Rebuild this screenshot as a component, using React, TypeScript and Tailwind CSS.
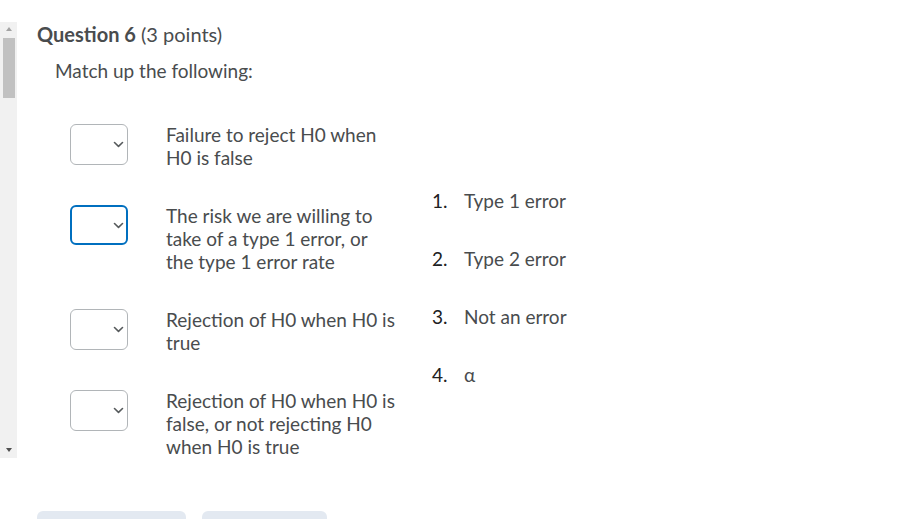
const prompts = [
  { text: 'Failure to reject H0 when H0 is false', focused: false },
  { text: 'The risk we are willing to take of a type 1 error, or the type 1 error rate', focused: true },
  { text: 'Rejection of H0 when H0 is true', focused: false },
  { text: 'Rejection of H0 when H0 is false, or not rejecting H0 when H0 is true', focused: false },
]

const answers = ['Type 1 error', 'Type 2 error', 'Not an error', 'α']

function Chevron() {
  return (
    <svg width="11" height="7" viewBox="0 0 11 7" fill="none" className="text-[#565a5c]">
      <path d="M1.5 1.5 L5.5 5.3 L9.5 1.5" stroke="currentColor" strokeWidth="1.6" strokeLinecap="round" strokeLinejoin="round" />
    </svg>
  )
}

function MatchSelect({ focused }: { focused: boolean }) {
  return (
    <div
      className={
        focused
          ? 'flex h-[40px] w-[58px] shrink-0 items-center justify-end rounded-[6px] border-2 border-[#006fbf] bg-white pr-[2px]'
          : 'flex h-[41px] w-[58px] shrink-0 items-center justify-end rounded-[6px] border border-[#b1b5b8] bg-white pr-[3px]'
      }
    >
      <Chevron />
    </div>
  )
}

function Scrollbar() {
  return (
    <div className="mt-[22px] flex h-[436px] w-[17px] shrink-0 flex-col items-center bg-[#f1f1f1]">
      <div className="mt-[5px] h-0 w-0 border-x-[3.5px] border-b-[4px] border-x-transparent border-b-[#a3a3a3]" />
      <div className="mt-[7px] h-[60px] w-[12px] bg-[#c1c1c1]" />
      <div className="flex-1" />
      <div className="mb-[6px] h-0 w-0 border-x-[3.5px] border-t-[4px] border-x-transparent border-t-[#505050]" />
    </div>
  )
}

export default function App() {
  return (
    <div className="relative flex h-[519px] w-[902px] overflow-hidden bg-white font-['Lato','Liberation_Sans',sans-serif] text-[#494c4e]">
      <Scrollbar />
      <div className="flex flex-1 flex-col pl-[20px] pt-[21px]">
        <h2 className="text-[20px] leading-[26px]">
          <span className="font-bold">Question 6</span> (3 points)
        </h2>
        <p className="ml-[18px] mt-[12px] text-[19px] leading-[24px]">Match up the following:</p>

        <div className="ml-[33px] mt-[40px] flex">
          <div className="flex flex-col gap-[35px]">
            {prompts.map((p) => (
              <div key={p.text} className="flex items-start">
                <div className="mt-[1px]">
                  <MatchSelect focused={p.focused} />
                </div>
                <p className="ml-[38px] w-[231px] text-[19px] leading-[23px]">{p.text}</p>
              </div>
            ))}
          </div>
          <ol className="ml-[35px] mt-[66px] flex flex-col gap-[35px] text-[19px] leading-[23px]">
            {answers.map((a, i) => (
              <li key={a} className="flex">
                <span className="w-[32px] text-[#202122]">{i + 1}.</span>
                <span>{a}</span>
              </li>
            ))}
          </ol>
        </div>

        <div className="mt-auto flex gap-[16px]">
          <div className="h-[8px] w-[149px] rounded-t-[6px] bg-[#e3e9f1]" />
          <div className="h-[8px] w-[125px] rounded-t-[6px] bg-[#e3e9f1]" />
        </div>
      </div>
    </div>
  )
}
